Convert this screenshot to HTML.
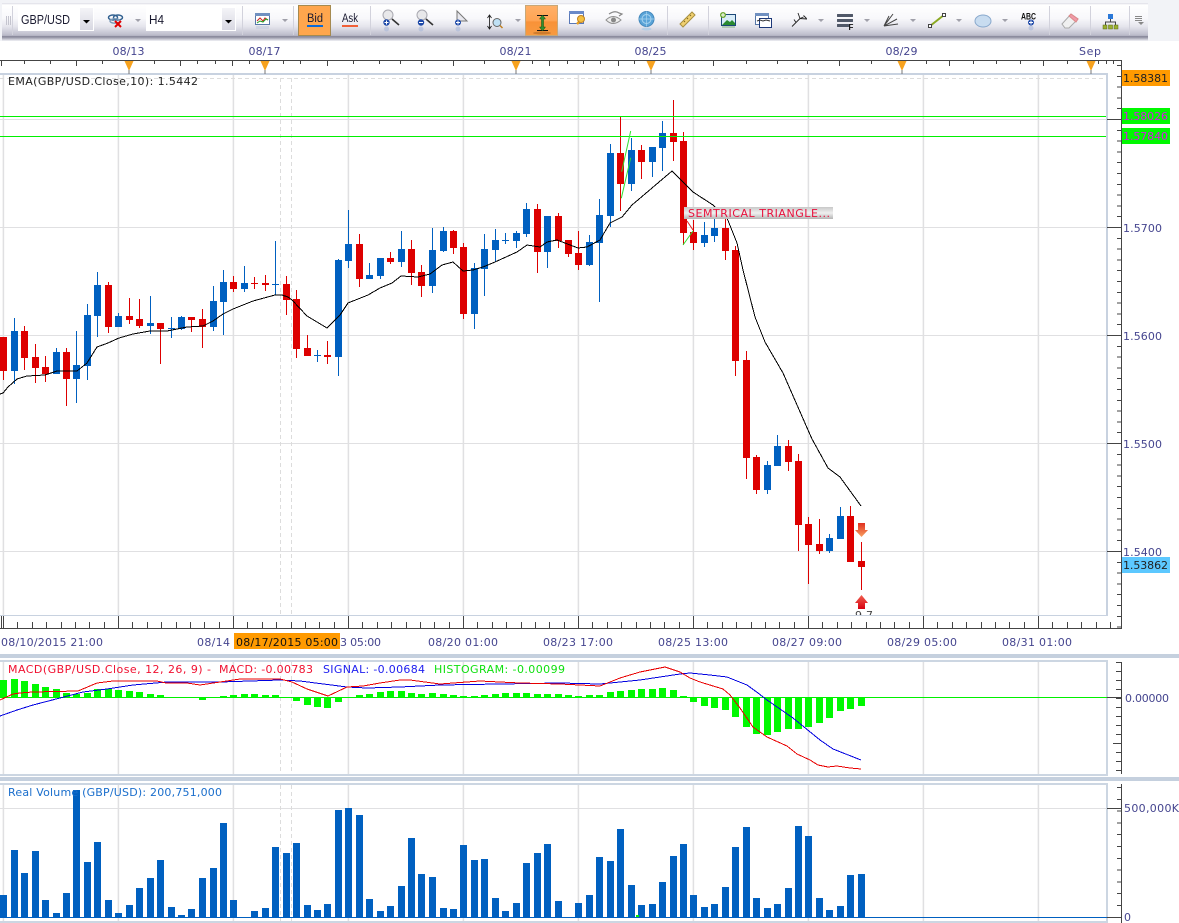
<!DOCTYPE html>
<html><head><meta charset="utf-8"><title>GBP/USD</title>
<style>html,body{margin:0;padding:0;background:#fff;overflow:hidden}svg{display:block}text{font-family:"DejaVu Sans","Liberation Sans",sans-serif;font-size:11px}.a{fill:#45458f}.t{font-family:"Liberation Sans",sans-serif;font-size:13px;fill:#1a1a30}.b{font-family:"Liberation Sans",sans-serif;font-size:11.5px;fill:#1a1a30}</style></head>
<body>
<svg xmlns="http://www.w3.org/2000/svg" width="1179" height="923" viewBox="0 0 1179 923">
<defs>
<linearGradient id="tb" x1="0" y1="0" x2="0" y2="1"><stop offset="0" stop-color="#dcdce6"/><stop offset=".06" stop-color="#fff"/><stop offset=".45" stop-color="#f8f8fb"/><stop offset=".7" stop-color="#e4e4ec"/><stop offset=".92" stop-color="#c0c0ce"/><stop offset="1" stop-color="#a8a8b8"/></linearGradient>
<linearGradient id="btn" x1="0" y1="0" x2="0" y2="1"><stop offset="0" stop-color="#ffb068"/><stop offset=".5" stop-color="#ffa454"/><stop offset=".55" stop-color="#f89238"/><stop offset="1" stop-color="#f89a40"/></linearGradient>
<linearGradient id="cb" x1="0" y1="0" x2="0" y2="1"><stop offset="0" stop-color="#f4f4f8"/><stop offset="1" stop-color="#d8d8e2"/></linearGradient>
<linearGradient id="ann" x1="0" y1="0" x2="0" y2="1"><stop offset="0" stop-color="#c8c8c8"/><stop offset=".5" stop-color="#f0f0f0"/><stop offset="1" stop-color="#b4b4b4"/></linearGradient>
<linearGradient id="dn" x1="0" y1="0" x2="0" y2="1"><stop offset="0" stop-color="#e03020"/><stop offset="1" stop-color="#f8a060"/></linearGradient>
<linearGradient id="up" x1="0" y1="0" x2="0" y2="1"><stop offset="0" stop-color="#f06050"/><stop offset="1" stop-color="#d80010"/></linearGradient>
<linearGradient id="shadow" x1="0" y1="0" x2="0" y2="1"><stop offset="0" stop-color="#8c8c9e"/><stop offset="1" stop-color="#f2f3f7"/></linearGradient>
<clipPath id="mc"><rect x="0" y="74" width="1107" height="541"/></clipPath>
</defs>

<!-- top background -->
<rect x="0" y="0" width="1179" height="41" fill="#f2f3f7"/>
<rect x="2" y="37" width="1146" height="4" fill="url(#shadow)"/>
<rect x="2" y="3" width="1146" height="34" fill="url(#tb)"/>
<rect x="2" y="36" width="1146" height="1" fill="#8c8c9e"/>

<!-- toolbar separators -->
<path d="M12.500 6V35M242.500 6V35M293.500 6V35M370.500 6V35M667.500 6V35M708.500 6V35M1049.500 6V35M1090.500 6V35M1129.500 6V35" stroke="#d2d2dc" fill="none"/>
<path d="M6.500 16V25M8.500 16V25M10.500 16V25" stroke="#c4c4ce" fill="none"/>

<!-- combos -->
<rect x="18" y="5" width="76" height="26" fill="#fff"/>
<rect x="80" y="8" width="13" height="22" fill="url(#cb)"/>
<path d="M83 20h7l-3.500 3.500z" fill="#000"/>
<text class="t" x="21" y="24" textLength="49" lengthAdjust="spacingAndGlyphs">GBP/USD</text>
<rect x="146" y="5" width="90" height="26" fill="#fff"/>
<rect x="222" y="8" width="13" height="22" fill="url(#cb)"/>
<path d="M225 20h7l-3.500 3.500z" fill="#000"/>
<text class="t" x="149" y="24" textLength="15" lengthAdjust="spacingAndGlyphs">H4</text>

<!-- chain broken -->
<g fill="none" stroke="#2f5f8f" stroke-width="1.400"><ellipse cx="113" cy="17.500" rx="4.500" ry="2.500"/><ellipse cx="118" cy="17.500" rx="4.500" ry="2.500"/><ellipse cx="115" cy="21" rx="5" ry="2.200" stroke="#7a9ab8"/></g>
<path d="M115 21l6 6M121 21l-6 6" stroke="#e00000" stroke-width="2" fill="none"/>
<!-- small drop triangles -->
<path d="M135 19h6l-3 3zM282 19h6l-3 3zM515 19h6l-3 3zM818 19h6l-3 3zM864 19h6l-3 3zM910 19h6l-3 3zM956 19h6l-3 3zM1002 19h6l-3 3z" fill="#a0a0aa"/>
<!-- chart icon -->
<rect x="255.500" y="13.500" width="14" height="11" fill="#fff" stroke="#5878a8"/><rect x="255" y="13" width="15" height="3" fill="#7090c0"/>
<path d="M257 21l3-3 3 3 2-3 3 2" fill="none" stroke="#d02020"/><path d="M257 23l3-2 3 1 3-3 2 1" fill="none" stroke="#20a020"/>
<rect x="256" y="26" width="13" height="3" fill="#c8cfe0" opacity=".7"/>

<!-- Bid -->
<rect x="298.500" y="5.500" width="32" height="30" fill="#ffa64d" stroke="#a58a50"/>
<text class="b" x="307" y="22" textLength="16" lengthAdjust="spacingAndGlyphs">Bid</text>
<rect x="307" y="25" width="16" height="2" fill="#0a6ad8"/>
<text class="b" x="342" y="22" textLength="16" lengthAdjust="spacingAndGlyphs">Ask</text>
<rect x="342" y="25" width="16" height="2" fill="#f06038"/>

<!-- zoom in -->
<circle cx="388" cy="15" r="5" fill="#e8e8ea" stroke="#a8a8b0"/><path d="M392 19l7 6" stroke="#333" stroke-width="1.600"/><circle cx="386.500" cy="22.500" r="3.200" fill="#1c48a8"/><path d="M384.500 22.500h4M386.500 20.500v4" stroke="#fff"/><circle cx="386.500" cy="29" r="2.500" fill="#a8b8d8" opacity=".6"/>
<!-- zoom out -->
<circle cx="422" cy="15" r="5" fill="#e8e8ea" stroke="#a8a8b0"/><path d="M426 19l7 6" stroke="#333" stroke-width="1.600"/><circle cx="421" cy="22.500" r="3.200" fill="#1c48a8"/><path d="M419 22.500h4" stroke="#fff"/><circle cx="421" cy="29" r="2.500" fill="#a8b8d8" opacity=".6"/>
<!-- arrow with plus -->
<path d="M457 11v12l3-2 7 0z" fill="#e8e8ee" stroke="#777"/><circle cx="458" cy="22.500" r="3" fill="#1c48a8"/><path d="M456 22.500h4M458 20.500v4" stroke="#fff"/><circle cx="458" cy="29" r="2.500" fill="#a8b8d8" opacity=".6"/>
<!-- range zoom -->
<path d="M489.500 16v12M487.500 18l2-3 2 3M487.500 26l2 3 2-3" fill="none" stroke="#111" stroke-width=".8"/><circle cx="497" cy="22.500" r="4" fill="#bfe0f4" stroke="#666"/><path d="M500 25.500l2.500 2.500" stroke="#c08020" stroke-width="1.500"/>
<!-- orange I-beam -->
<rect x="525.500" y="5.500" width="32" height="30" fill="url(#btn)" stroke="#c8a878"/>
<path d="M537 15.500h11M537 30.500h11" stroke="#111"/><path d="M542.500 15l-3 4h2v8h-2l3 4 3-4h-2v-8h2z" fill="#2f8f2f" stroke="#0e4e0e" stroke-width=".5"/><ellipse cx="542" cy="33" rx="9" ry="1.500" fill="#a06020" opacity=".5"/>
<!-- window with key -->
<rect x="569.500" y="11.500" width="14" height="12" fill="#fff" stroke="#5878b8"/><rect x="569" y="11" width="15" height="3" fill="#6a8ac8"/>
<path d="M577 24l7-7" stroke="#e8a020" stroke-width="2.500"/><circle cx="581" cy="19" r="3.500" fill="#f4c040" stroke="#c08020"/>
<!-- eye -->
<path d="M606 20q7-7 15 0q-8 7-15 0z" fill="#eee" stroke="#909090"/><circle cx="613.500" cy="20" r="2.500" fill="#888"/><path d="M609 14q6-4 10-1l3 1-3 2" fill="none" stroke="#888" stroke-width="1.200"/>
<!-- globe -->
<circle cx="646.500" cy="19" r="7.500" fill="#5aa4d8" stroke="#4488bb"/><circle cx="646.500" cy="19" r="4.500" fill="none" stroke="#a8d4f0"/><path d="M639 19h15M646.500 11.500v15" stroke="#a8d4f0" stroke-width=".7"/><ellipse cx="646.500" cy="29" rx="5" ry="1.500" fill="#a0c8e8" opacity=".6"/>
<!-- ruler -->
<path d="M680 24l12-12 3 3-12 12z" fill="#f0d070" stroke="#a89040"/><path d="M684 21l1 1M687 18l1 1M690 15l1 1" stroke="#806820"/>
<!-- picture plus -->
<rect x="721.500" y="14.500" width="14" height="11" fill="#d8ecf8" stroke="#1c4878"/><path d="M722 25l5-5 3 2 2-2 3 3v2z" fill="#2a8a30"/><circle cx="723" cy="15" r="3" fill="#6aa830"/><path d="M721 15h4M723 13v4" stroke="#fff"/><rect x="722" y="26" width="13" height="2" fill="#80b080" opacity=".5"/>
<!-- window chart -->
<rect x="755.500" y="13.500" width="13" height="11" fill="#fff" stroke="#5878a8"/><rect x="755" y="13" width="14" height="3" fill="#7090c0"/><rect x="759.500" y="18.500" width="12" height="9" fill="#fff" stroke="#1c3878"/><path d="M757 21l3-1 3 1 3-1 4 1" fill="none" stroke="#333"/>
<!-- fork -->
<path d="M792 26.500l8-8M800 18.500l-2-5.500M800 18.500l3.500-1.500M800 18.500l7 .5M796 22.500l-2-3M803.500 15.500l3 3" fill="none" stroke="#222" stroke-width=".9"/>
<!-- F list -->
<rect x="837" y="14" width="16" height="3" rx=".5" fill="#505868"/><rect x="837" y="19" width="16" height="3" rx=".5" fill="#505868"/><rect x="837" y="24" width="12" height="3" rx=".5" fill="#505868"/><text x="848.500" y="30" style="font-family:'Liberation Sans',sans-serif;font-size:8px;font-weight:bold" fill="#111">F</text>
<!-- fan -->
<path d="M884 26l5-10M884 26l9-12M884 26l13-7M884 26l14-2" fill="none" stroke="#444"/>
<!-- line -->
<path d="M930 26l14-11" stroke="#8aa820" stroke-width="2"/><rect x="928.500" y="24.500" width="3" height="3" fill="#fff" stroke="#444"/><rect x="942.500" y="13.500" width="3" height="3" fill="#fff" stroke="#444"/>
<!-- ellipse -->
<ellipse cx="983" cy="21" rx="8" ry="6" fill="#c8dcf0" stroke="#88a8cc"/>
<!-- ABC -->
<text x="1021" y="19.500" textLength="15" lengthAdjust="spacingAndGlyphs" style="font-family:'Liberation Sans',sans-serif;font-size:9px;font-weight:bold" fill="#111">ABC</text><circle cx="1031" cy="22.500" r="3" fill="#1c48a8"/><path d="M1029 22.500h4M1031 20.500v4" stroke="#fff"/><circle cx="1031" cy="28" r="2.500" fill="#a8b8d8" opacity=".6"/>
<!-- eraser -->
<path d="M1062 24l9-10 7 5-9 9h-4z" fill="#f0f0f0" stroke="#aaa"/><path d="M1069 16l2-2 7 5-2 3z" fill="#f09aa8" stroke="#d88"/>
<!-- tree -->
<rect x="1108" y="14" width="5" height="5" fill="#2a78d8"/><path d="M1110.500 19v3M1105.500 25v-3h10v3" fill="none" stroke="#444"/><rect x="1103" y="25" width="4" height="4" fill="#9ab030" stroke="#5a6a10" stroke-width=".5"/><rect x="1108.500" y="25" width="4" height="4" fill="#9ab030" stroke="#5a6a10" stroke-width=".5"/><rect x="1114" y="25" width="4" height="4" fill="#9ab030" stroke="#5a6a10" stroke-width=".5"/>
<!-- overflow -->
<path d="M1135 16.500h7M1135 18.500h7M1135 20.500h7" stroke="#888" fill="none"/><path d="M1138 22h6l-3 3z" fill="#888"/>

<!-- top dates -->
<text class="a" x="112.500" y="55" textLength="32">08/13</text>
<text class="a" x="248.500" y="55" textLength="32">08/17</text>
<text class="a" x="499.500" y="55" textLength="32">08/21</text>
<text class="a" x="634.500" y="55" textLength="32">08/25</text>
<text class="a" x="885.500" y="55" textLength="32">08/29</text>
<text class="a" x="1079" y="55" textLength="22">Sep</text>

<!-- top axis -->
<g shape-rendering="crispEdges" fill="none" stroke="#444">
<path d="M0 60.500H1122M1121.500 60V628"/>
<path d="M1.500 61V66M24.500 61V64M50.500 61V64M76.500 61V66M102.500 61V64M154.500 61V64M180.500 61V66M197.500 61V64M215.500 61V64M232.500 61V66M249.500 61V64M283.500 61V64M300.500 61V64M327.500 61V66M353.500 61V64M379.500 61V64M400.500 61V64M421.500 61V64M453.500 61V66M484.500 61V64M532.500 61V64M549.500 61V66M567.500 61V64M583.500 61V64M600.500 61V64M618.500 61V66M634.500 61V64M683.500 61V64M713.500 61V66M746.500 61V64M777.500 61V64M807.500 61V64M839.500 61V66M871.500 61V64M926.500 61V64M949.500 61V66M973.500 61V64M996.500 61V64M1020.500 61V64M1043.500 61V66M1067.500 61V64M1098.500 61V64M1106.500 61V64M1113.500 61V64"/>
</g>

<!-- main frame and grid -->
<g fill="none">
<path shape-rendering="crispEdges" d="M0 73.500H1107M0 74.500H1107" stroke="#c8d2e0"/>
<path shape-rendering="crispEdges" d="M0 615.500H1107" stroke="#c8d2e0"/>
<path shape-rendering="crispEdges" d="M1106.500 73V616M1107.500 73V616" stroke="#c8d2e0"/>
<path d="M3.400 75V615M118.400 75V615M233.400 75V615M348.400 75V615M463.400 75V615M578.400 75V615M693.400 75V615M808.400 75V615M923.400 75V615M1038.400 75V615" stroke="#e0e0e2" stroke-width="1.500"/>
<path shape-rendering="crispEdges" d="M0 119.500H1106M0 227.500H1106M0 335.500H1106M0 443.500H1106M0 551.500H1106" stroke="#e0e0e2"/>
<path shape-rendering="crispEdges" d="M0 78.500H1106" stroke="#dcdcdc" stroke-dasharray="4 3"/>
<path shape-rendering="crispEdges" d="M280.500 78V615M291.500 78V615" stroke="#dcdcdc" stroke-dasharray="4 3"/>
</g>

<!-- candles -->
<g shape-rendering="crispEdges" fill="none">
<path stroke="#dd0000" d="M3.500 337V380M24.500 326V370M35.500 344V383M45.500 356V382M66.500 348V406M108.500 282V333M129.500 298V324M139.500 299V328M160.500 323V364M191.500 317V332M202.500 309V348M233.500 276V292M254.500 277V289M265.500 275V291M286.500 276V315M296.500 290V358M307.500 335V356M327.500 341V364M359.500 234V287M390.500 252V264M411.500 240V285M421.500 265V297M453.500 230V254M463.500 243V319M537.500 204V273M558.500 213V248M568.500 240V257M578.500 231V270M620.500 117V211M641.500 145V179M673.500 100V161M683.500 132V245M693.500 220V250M725.500 218V260M735.500 246V376M746.500 351V479M756.500 455V494M788.500 440V471M798.500 454V551M808.500 517V584M819.500 519V554M850.500 506V562M861.500 542V590"/>
<path stroke="#0060c0" d="M14.500 318V384M56.500 348V374M76.500 331V403M87.500 304V380M97.500 272V337M118.500 313V327M150.500 296V334M171.500 317V338M181.500 316V330M213.500 286V331M223.500 270V335M244.500 266V292M275.500 241V295M317.500 350V362M338.500 259V376M348.500 210V268M369.500 263V279M380.500 258V279M401.500 231V267M432.500 228V293M443.500 227V252M474.500 263V329M484.500 234V296M495.500 229V262M505.500 233V244M516.500 231V248M526.500 203V237M547.500 216V268M589.500 235V266M599.500 199V302M610.500 144V227M631.500 138V191M652.500 147V177M662.500 121V171M704.500 222V247M714.500 218V242M767.500 461V494M777.500 435V466M829.500 534V553M840.500 507V539"/>
<path stroke="#dd0000" stroke-width="7" d="M3.500 337V371M24.500 331V358M35.500 357V368M45.500 367V374M66.500 352V379M108.500 285V327M129.500 316V320M139.500 319V326M160.500 323V329M191.500 317V320M202.500 319V327M233.500 282V289M254.500 283V284M265.500 283V285M286.500 284V300M296.500 299V349M307.500 348V356M327.500 355V357M359.500 244V279M390.500 258V262M411.500 249V273M421.500 272V286M453.500 231V248M463.500 247V314M537.500 209V252M558.500 216V241M568.500 240V254M578.500 253V265M620.500 153V184M641.500 150V162M673.500 133V142M683.500 141V233M693.500 232V243M725.500 228V251M735.500 250V361M746.500 360V458M756.500 457V490M788.500 446V462M798.500 461V525M808.500 524V545M819.500 544V551M850.500 516V562M861.500 561V567"/>
<path stroke="#0060c0" stroke-width="7" d="M14.500 331V371M56.500 352V374M76.500 365V379M87.500 315V366M97.500 285V316M118.500 316V327M150.500 323V326M171.500 328V329M181.500 317V329M213.500 301V327M223.500 282V302M244.500 283V289M275.500 284V285M317.500 355V356M338.500 260V357M348.500 244V261M369.500 275V279M380.500 258V276M401.500 249V262M432.500 250V286M443.500 231V251M474.500 268V314M484.500 249V269M495.500 240V250M505.500 240V241M516.500 233V241M526.500 209V234M547.500 216V252M589.500 242V265M599.500 215V243M610.500 153V216M631.500 150V184M652.500 147V162M662.500 133V148M704.500 235V243M714.500 228V236M767.500 465V490M777.500 446V466M829.500 538V551M840.500 516V539"/>
</g>

<!-- EMA -->
<polyline fill="none" stroke="#000" stroke-width="1" shape-rendering="crispEdges" points="0,394 3,393 8,387 17,379 27,376 45,375 57,371 77,371 87,363 97,347 108,343 119,338 133,334 150,331 167,331 187,327 203,326 213,321 223,314 233,309 253,301 275,295 282,295 288,297 292,300 307,316 327,328 340,315 348,303 368,295 380,288 392,283 401,276 418,277 430,274 442,265 453,262 463,271 473,270 483,267 495,262 517,252 527,245 540,247 547,242 557,240 578,248 587,247 600,240 610,223 622,217 632,205 652,188 672,171 693,192 713,205 727,218 737,243 743,270 755,317 765,342 783,373 808,430 812,439 828,468 840,477 861,506"/>

<!-- green lines -->
<path d="M0 116.500H1106M0 136.500H1106" stroke="#00f000" shape-rendering="crispEdges" fill="none"/>
<!-- pattern lines -->
<path d="M621.700 171.700L630.700 131M621.300 198.300L630.700 157.700M683 245L693 231" stroke="#30e030" fill="none"/>
<path d="M687 221L693 230" stroke="#e02020" fill="none"/>
<!-- annotation -->
<rect x="684" y="207" width="149" height="12" fill="url(#ann)"/>
<text x="688" y="217" textLength="142" fill="#e8103c">SEMTRICAL TRIANGLE...</text>
<!-- arrows -->
<path d="M858 523h7v7h3l-6.500 7-6.500-7h3z" fill="url(#dn)"/>
<path d="M861.500 595l6.500 8h-3v6h-7v-6h-3z" fill="url(#up)"/>
<g clip-path="url(#mc)"><text x="855" y="619" textLength="18" fill="#444">9.7</text></g>
<text x="8" y="85" textLength="190" fill="#222">EMA(GBP/USD.Close,10): 1.5442</text>

<!-- top orange markers -->
<g fill="#f7a21e"><path d="M124.500 61h9l-4.500 10zM260.500 61h9l-4.500 10zM511.500 61h9l-4.500 10zM646.500 61h9l-4.500 10zM897.500 61h9l-4.500 10zM1086.500 61h9l-4.500 10z"/></g>
<path d="M129 70v4M265 70v4M516 70v4M651 70v4M902 70v4M1091 70v4" stroke="#777" fill="none" shape-rendering="crispEdges"/>

<!-- right axis main -->
<g fill="none" shape-rendering="crispEdges" stroke="#444">
<path d="M1119 65V628" stroke-width="4" stroke-dasharray="1 9.800"/>
<path d="M1107 119.500H1121M1107 227.500H1121M1107 335.500H1121M1107 443.500H1121M1107 551.500H1121"/>
</g>
<text class="a" x="1123" y="232" textLength="39">1.5700</text>
<text class="a" x="1123" y="340" textLength="39">1.5600</text>
<text class="a" x="1123" y="448" textLength="39">1.5500</text>
<text class="a" x="1123" y="556" textLength="39">1.5400</text>

<rect x="1122" y="70" width="48" height="16" fill="#ff9a00"/>
<text x="1123" y="82" textLength="45" fill="#222">1.58381</text>
<rect x="1122" y="108" width="48" height="16" fill="#00f800"/>
<text x="1123" y="120" textLength="45" fill="#d818e8">1.58026</text>
<rect x="1122" y="128" width="48" height="16" fill="#00f800"/>
<text x="1123" y="140" textLength="45" fill="#d818e8">1.57840</text>
<rect x="1122" y="557" width="48" height="16" fill="#5cc8ff"/>
<text x="1123" y="569" textLength="45" fill="#222">1.53862</text>

<!-- bottom axis -->
<g fill="none" shape-rendering="crispEdges" stroke="#444">
<path d="M0 628.500H1122"/>
<path d="M17.500 622V628M32.500 622V628M46.500 622V628M61.500 622V628M75.500 622V628M89.500 622V628M104.500 622V628M132.500 622V628M147.500 622V628M161.500 622V628M176.500 622V628M190.500 622V628M204.500 622V628M219.500 622V628M247.500 622V628M262.500 622V628M276.500 622V628M291.500 622V628M305.500 622V628M319.500 622V628M334.500 622V628M362.500 622V628M377.500 622V628M391.500 622V628M406.500 622V628M420.500 622V628M434.500 622V628M449.500 622V628M477.500 622V628M492.500 622V628M506.500 622V628M521.500 622V628M535.500 622V628M549.500 622V628M564.500 622V628M592.500 622V628M607.500 622V628M621.500 622V628M636.500 622V628M650.500 622V628M664.500 622V628M679.500 622V628M707.500 622V628M722.500 622V628M736.500 622V628M751.500 622V628M765.500 622V628M779.500 622V628M794.500 622V628M822.500 622V628M837.500 622V628M851.500 622V628M866.500 622V628M880.500 622V628M894.500 622V628M909.500 622V628M937.500 622V628M952.500 622V628M966.500 622V628M981.500 622V628M995.500 622V628M1009.500 622V628M1024.500 622V628M1052.500 622V628M1067.500 622V628M1081.500 622V628M1096.500 622V628M1110.500 622V628"/>
<path d="M1.500 616V628M3.500 616V628M118.500 616V628M233.500 616V628M348.500 616V628M463.500 616V628M578.500 616V628M693.500 616V628M808.500 616V628M923.500 616V628M1038.500 616V628"/>
</g>
<text class="a" x="1" y="646" textLength="102">08/10/2015 21:00</text>
<text class="a" x="197" y="646" textLength="33">08/14</text>
<text class="a" x="340" y="646" textLength="41">3 05:00</text>
<text class="a" x="428" y="646" textLength="70">08/20 01:00</text>
<text class="a" x="543" y="646" textLength="70">08/23 17:00</text>
<text class="a" x="658" y="646" textLength="70">08/25 13:00</text>
<text class="a" x="772" y="646" textLength="70">08/27 09:00</text>
<text class="a" x="887" y="646" textLength="70">08/29 05:00</text>
<text class="a" x="1002" y="646" textLength="70">08/31 01:00</text>
<rect x="234" y="633" width="106" height="16" fill="#ff9a00"/>
<text x="236" y="646" textLength="102" fill="#111">08/17/2015 05:00</text>

<!-- bands -->
<rect x="0" y="654" width="1179" height="4" fill="#c5d0de"/>
<rect x="0" y="777" width="1179" height="4" fill="#c5d0de"/>

<!-- MACD pane -->
<g fill="none">
<path shape-rendering="crispEdges" d="M0 660.500H1107M0 661.500H1107M0 774.500H1107M0 775.500H1107M1106.500 660V776M1107.500 660V776" stroke="#ccd6e2"/>
<path d="M3.400 662V774M118.400 662V774M233.400 662V774M348.400 662V774M463.400 662V774M578.400 662V774M693.400 662V774M808.400 662V774M923.400 662V774M1038.400 662V774" stroke="#e0e0e2" stroke-width="1.500"/>
<path shape-rendering="crispEdges" d="M280.500 662V774M291.500 662V774" stroke="#dcdcdc" stroke-dasharray="4 3"/>
<path shape-rendering="crispEdges" stroke="#00f800" stroke-width="7" d="M3.500 680V698M14.500 679V698M24.500 681V698M35.500 684V698M45.500 687V698M56.500 689V698M66.500 693V698M76.500 694V698M87.500 693V698M97.500 689V698M108.500 689V698M118.500 690V698M129.500 691V698M139.500 692V698M150.500 694V698M160.500 695V698M202.500 698V700M223.500 696V698M233.500 695V698M244.500 694V698M254.500 694V698M265.500 695V698M275.500 695V698M296.500 698V701M307.500 698V705M317.500 698V707M327.500 698V708M338.500 698V702M359.500 695V698M369.500 694V698M380.500 692V698M390.500 691V698M401.500 691V698M411.500 693V698M421.500 694V698M432.500 693V698M443.500 694V698M453.500 695V698M463.500 696V698M474.500 696V698M484.500 695V698M495.500 694V698M505.500 693V698M516.500 693V698M526.500 693V698M537.500 694V698M547.500 694V698M558.500 694V698M568.500 695V698M578.500 696V698M589.500 695V698M599.500 695V698M610.500 692V698M620.500 691V698M631.500 690V698M641.500 689V698M652.500 689V698M662.500 688V698M673.500 690V698M683.500 696V698M693.500 698V702M704.500 698V706M714.500 698V708M725.500 698V710M735.500 698V717M746.500 698V727M756.500 698V734M767.500 698V735M777.500 698V732M788.500 698V729M798.500 698V729M808.500 698V727M819.500 698V723M829.500 698V718M840.500 698V711M850.500 698V709M861.500 698V706"/>
<path shape-rendering="crispEdges" d="M0 697.500H1107" stroke="#00f000"/>
</g>
<polyline fill="none" stroke="#0000e0" shape-rendering="crispEdges" points="0,716 17,710 33,705 60,698 83,692 107,689 133,685 167,682 220,682 280,680 300,681 347,687 367,688 400,687 440,685 500,684 560,683 600,684 640,680 660,677 680,674 690,673 710,675 727,677 747,685 758,693 767,700 793,718 820,740 833,749 861,760"/>
<polyline fill="none" stroke="#e80000" shape-rendering="crispEdges" points="0,700 13,694 20,693 33,692 78,691 97,683 113,681 157,681 166,683 187,683 200,685 220,682 240,679 280,679 292,682 307,689 328,696 347,687 363,686 380,683 400,680 410,680 440,684 480,681 520,683 560,684 600,686 620,678 640,672 665,667 680,672 690,678 700,682 723,689 730,695 740,708 753,727 767,737 787,746 797,754 810,760 818,765 828,767 837,766 850,768 861,769"/>
<text x="8" y="673" textLength="203" fill="#f01030">MACD(GBP/USD.Close, 12, 26, 9) -</text>
<text x="219" y="673" textLength="94" fill="#f01030">MACD: -0.00783</text>
<text x="323" y="673" textLength="102" fill="#2020f0">SIGNAL: -0.00684</text>
<text x="434" y="673" textLength="131" fill="#10e010">HISTOGRAM: -0.00099</text>
<g fill="none" shape-rendering="crispEdges" stroke="#444">
<path d="M1121.500 662V774M1107 697.500H1121M1113 743.500H1121"/>
<path d="M1118.500 662V774" stroke-width="5" stroke-dasharray="1 8"/>
</g>
<text class="a" x="1125" y="702" textLength="44">0.00000</text>

<!-- Volume pane -->
<g fill="none">
<path shape-rendering="crispEdges" d="M0 783.500H1107M0 784.500H1107M0 921.500H1107M0 922.500H1107M1106.500 783V923M1107.500 783V923" stroke="#ccd6e2"/>
<path d="M3.400 785V921M118.400 785V921M233.400 785V921M348.400 785V921M463.400 785V921M578.400 785V921M693.400 785V921M808.400 785V921M923.400 785V921M1038.400 785V921" stroke="#e0e0e2" stroke-width="1.500"/>
<path shape-rendering="crispEdges" d="M0 808.500H1106" stroke="#e0e0e2"/>
<path shape-rendering="crispEdges" d="M280.500 785V921M291.500 785V921" stroke="#dcdcdc" stroke-dasharray="4 3"/>
<path shape-rendering="crispEdges" stroke="#0060c0" stroke-width="7" d="M3.500 895V918M14.500 850V918M24.500 873V918M35.500 851V918M45.500 900V918M56.500 913V918M66.500 893V918M76.500 790V918M87.500 862V918M97.500 842V918M108.500 900V918M118.500 913V918M129.500 905V918M139.500 888V918M150.500 878V918M160.500 860V918M171.500 907V918M181.500 915V918M191.500 909V918M202.500 878V918M213.500 868V918M223.500 823V918M233.500 900V918M254.500 911V918M265.500 908V918M275.500 847V918M286.500 853V918M296.500 843V918M307.500 905V918M317.500 910V918M327.500 904V918M338.500 810V918M348.500 808V918M359.500 815V918M369.500 899V918M380.500 911V918M390.500 906V918M401.500 886V918M411.500 838V918M421.500 874V918M432.500 877V918M443.500 908V918M453.500 909V918M463.500 845V918M474.500 860V918M484.500 859V918M495.500 898V918M505.500 911V918M516.500 903V918M526.500 863V918M537.500 853V918M547.500 844V918M558.500 901V918M578.500 903V918M589.500 895V918M599.500 857V918M610.500 861V918M620.500 829V918M631.500 885V918M641.500 905V918M652.500 904V918M662.500 882V918M673.500 856V918M683.500 844V918M693.500 895V918M704.500 907V918M714.500 904V918M725.500 887V918M735.500 847V918M746.500 827V918M756.500 898V918M767.500 908V918M777.500 904V918M788.500 888V918M798.500 826V918M808.500 836V918M819.500 898V918M829.500 910V918M840.500 906V918M850.500 875V918M861.500 874V918"/>
<path shape-rendering="crispEdges" d="M0 917.500H1107" stroke="#0060c0"/>
</g>
<rect x="636" y="915" width="3" height="2" fill="#00f000"/>
<text x="8" y="796" textLength="214" fill="#1a6ecc">Real Volume (GBP/USD): 200,751,000</text>
<g fill="none" shape-rendering="crispEdges" stroke="#444">
<path d="M1121.500 784V923M1107 808.500H1121M1107 917.500H1121"/>
<path d="M1119 787V923" stroke-width="4" stroke-dasharray="1 10.800"/>
</g>
<text class="a" x="1124" y="812" textLength="55">500,000K</text>
<text class="a" x="1124" y="921">0</text>
</svg>
</body></html>
